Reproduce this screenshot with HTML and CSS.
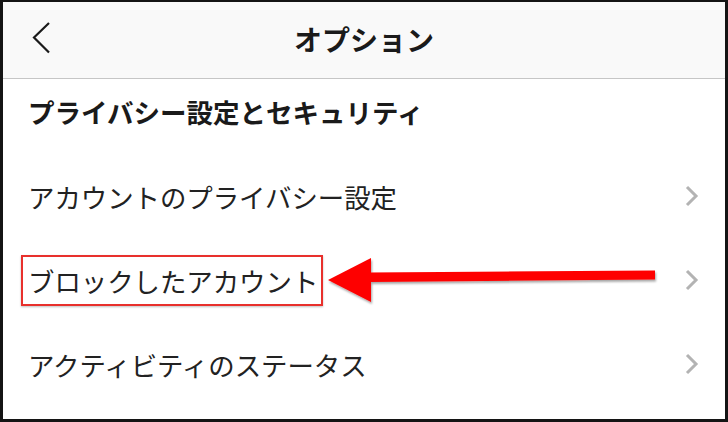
FILE: index.html
```html
<!DOCTYPE html>
<html lang="ja">
<head>
<meta charset="utf-8">
<link rel="stylesheet" href="styles.css">
</head>
<body>
<div class="frame">
  <header class="topbar">
    <svg class="back" width="20" height="34" viewBox="0 0 20 34"><polyline points="17,1 2,15.5 17,30.5" fill="none" stroke="#1a1a1a" stroke-width="2.2"/></svg>
    <h1 class="title">オプション</h1>
  </header>
  <div class="section">プライバシー設定とセキュリティ</div>
  <div class="row"><span class="label">アカウントのプライバシー設定</span><svg class="chev" width="16" height="22" viewBox="0 0 16 22"><polyline points="3,2 12,11 3,20" fill="none" stroke="#b3b3b3" stroke-width="3"/></svg></div>
  <div class="row row-mark"><span class="label marked">ブロックしたアカウント</span><svg class="chev" width="16" height="22" viewBox="0 0 16 22"><polyline points="3,2 12,11 3,20" fill="none" stroke="#b3b3b3" stroke-width="3"/></svg></div>
  <div class="row"><span class="label">アクティビティのステータス</span><svg class="chev" width="16" height="22" viewBox="0 0 16 22"><polyline points="3,2 12,11 3,20" fill="none" stroke="#b3b3b3" stroke-width="3"/></svg></div>
  <svg class="arrow" width="728" height="422" viewBox="0 0 728 422">
    <defs>
      <filter id="sh" x="-5%" y="-20%" width="110%" height="160%">
        <feDropShadow dx="1" dy="2" stdDeviation="1.2" flood-color="#000" flood-opacity="0.35"/>
      </filter>
    </defs>
    <g filter="url(#sh)" fill="#fe0000">
      <polygon points="328,280 371,258 371,302"/>
      <polygon points="369,272.5 655,270.5 655,279.5 369,282"/>
    </g>
  </svg>
</div>
</body>
</html>
```

FILE: styles.css
```css
html, body {
  margin: 0;
  padding: 0;
  background: #fff;
}
body {
  font-family: "Noto Sans CJK JP", "Noto Sans", sans-serif;
  color: #222;
}
.frame {
  position: relative;
  width: 728px;
  height: 422px;
  box-sizing: border-box;
  border-style: solid;
  border-color: #141414;
  border-width: 2px 3px 3px 3px;
  background: #fff;
  overflow: hidden;
  display: flex;
  flex-direction: column;
}
.topbar {
  height: 76px;
  flex: none;
  background: #f9f9f9;
  border-bottom: 1px solid #c6c6c6;
  display: flex;
  align-items: center;
  justify-content: center;
  position: relative;
}
.back {
  position: absolute;
  left: 29px;
  top: 20px;
}
.title {
  margin: 0;
  font-size: 28px;
  font-weight: 700;
  line-height: 36px;
  color: #1a1a1a;
  margin-top: -3px;
}
.section {
  font-size: 26.5px;
  font-weight: 700;
  line-height: 34px;
  padding: 16px 0 25px 25px;
  color: #1a1a1a;
}
.row {
  height: 84px;
  display: flex;
  align-items: center;
  justify-content: space-between;
  padding-left: 25px;
  padding-right: 25px;
  font-size: 26.4px;
  line-height: 35px;
  color: #222;
}
.row-mark {
  padding-left: 18px;
}
.marked {
  border: 2px solid #e8302c;
  padding: 6px 3px 6px 5px;
  box-shadow: 0 1px 2px rgba(0,0,0,0.25);
}
.chev {
  flex: none;
}
.arrow {
  position: absolute;
  left: -3px;
  top: -2px;
  pointer-events: none;
}
```
